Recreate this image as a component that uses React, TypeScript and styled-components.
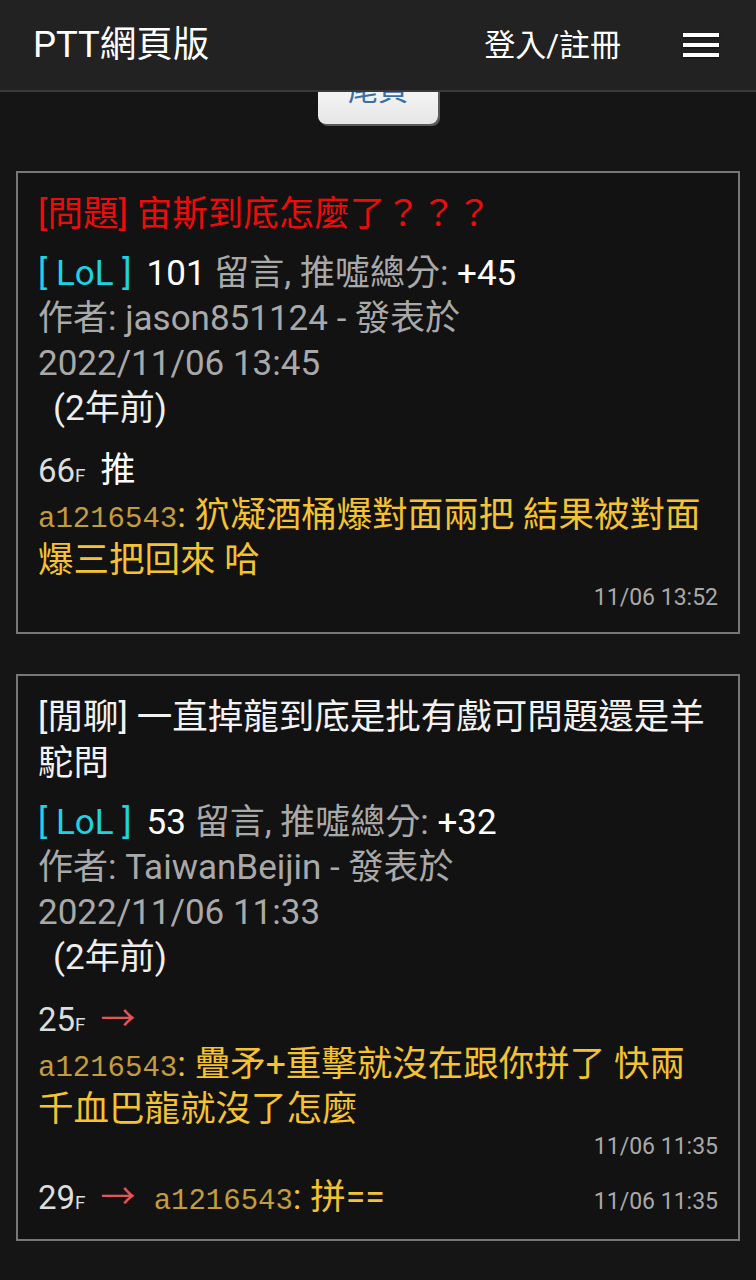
import React from 'react';
import styled, { createGlobalStyle } from 'styled-components';

const GlobalStyle = createGlobalStyle`
  html, body { margin: 0; padding: 0; background: #151515; }
  body {
    font-family: Roboto, "Noto Sans CJK TC", sans-serif;
    color: #eee;
  }
  * { box-sizing: border-box; }
`;

const Header = styled.header`
  position: fixed;
  top: 0;
  left: 0;
  right: 0;
  height: 92px;
  background: #222;
  border-bottom: 2px solid #3a3a3a;
  display: flex;
  align-items: center;
  padding: 0 37px 0 33px;
  z-index: 10;
`;

const Brand = styled.div`
  flex: 1;
  font-size: 36.5px;
  color: #fff;
  line-height: 1;
`;

const Login = styled.a`
  font-size: 31px;
  color: #fff;
  text-decoration: none;
  margin-right: 62px;
  line-height: 1;
`;

const Burger = styled.svg`
  display: block;
  width: 36px;
  height: 24px;
  filter: drop-shadow(0 1px 1px rgba(0, 0, 0, 0.6));
`;

const Main = styled.main`
  padding-top: 68px;
  padding-bottom: 40px;
`;

const PagerRow = styled.div`
  display: flex;
  justify-content: center;
  margin-bottom: 47px;
`;

const PagerButton = styled.button`
  width: 120px;
  height: 56px;
  border: none;
  border-radius: 0 0 8px 8px;
  background: linear-gradient(#ffffff, #e6e6e6);
  box-shadow: 2px 2px 0 #5a5a5a;
  color: #3b6ea6;
  font-family: Roboto, "Noto Sans CJK TC", sans-serif;
  font-size: 30px;
  line-height: 44px;
  padding: 0 0 12px;
  display: flex;
  justify-content: center;
`;

const Card = styled.article`
  margin: 0 16px 40px;
  border: 2px solid #777;
  background: #121212;
  padding: 18px 20px 19px;
`;

const Title = styled.div<{ $tone: string }>`
  font-size: 35.5px;
  line-height: 46px;
  color: ${(p) => p.$tone};
  margin-bottom: 14px;
`;

const MetaLine = styled.div<{ $indent?: boolean; $light?: boolean }>`
  font-size: 35px;
  line-height: 45px;
  color: ${(p) => (p.$light ? '#eee' : '#a9a9a9')};
  padding-left: ${(p) => (p.$indent ? '15px' : '0')};
  white-space: nowrap;
`;

const Board = styled.span`
  color: #1fd3e2;
  margin-right: 15px;
`;

const Strong = styled.span`
  color: #fff;
`;

const Pushes = styled.div`
  margin-top: 17px;
  display: flex;
  flex-direction: column;
  gap: 13px;
`;

const PushRow = styled.div`
  display: flex;
  flex-wrap: wrap;
  align-items: baseline;
  line-height: 45px;
`;

const Floor = styled.span`
  font-size: 33px;
  color: #ddd;
  margin-right: 15px;
`;

const FloorMark = styled.span`
  font-size: 19px;
  line-height: 1;
`;

const Tag = styled.span<{ $arrow?: boolean }>`
  font-size: 35px;
  color: ${(p) => (p.$arrow ? '#e0575a' : '#fff')};
  margin-right: 18px;
`;

const Body = styled.span`
  max-width: calc(100% - 10px);
  font-size: 35.5px;
  color: #f4c232;
`;

const User = styled.span`
  font-family: "Liberation Mono", monospace;
  font-size: 29px;
  line-height: 1;
  color: #c29c3e;
`;

const Time = styled.span`
  margin-left: auto;
  font-size: 23px;
  line-height: 30px;
  color: #a9a9a9;
`;

type Push = { floor: number; tag: 'push' | 'arrow'; user: string; text: string; time: string };

type Post = {
  title: string;
  tone: string;
  board: string;
  count: number;
  score: string;
  author: string;
  date: string;
  ago: string;
  pushes: Push[];
};

const posts: Post[] = [
  {
    title: '[問題] 宙斯到底怎麼了？？？',
    tone: '#ec0c0c',
    board: 'LoL',
    count: 101,
    score: '+45',
    author: 'jason851124',
    date: '2022/11/06 13:45',
    ago: '(2年前)',
    pushes: [
      { floor: 66, tag: 'push', user: 'a1216543', text: '狖凝酒桶爆對面兩把 結果被對面爆三把回來 哈', time: '11/06 13:52' },
    ],
  },
  {
    title: '[閒聊] 一直掉龍到底是批有戲可問題還是羊駝問',
    tone: '#f2f2f2',
    board: 'LoL',
    count: 53,
    score: '+32',
    author: 'TaiwanBeijin',
    date: '2022/11/06 11:33',
    ago: '(2年前)',
    pushes: [
      { floor: 25, tag: 'arrow', user: 'a1216543', text: '疊矛+重擊就沒在跟你拼了 快兩千血巴龍就沒了怎麼', time: '11/06 11:35' },
      { floor: 29, tag: 'arrow', user: 'a1216543', text: '拼==', time: '11/06 11:35' },
    ],
  },
];

export default function App() {
  return (
    <>
      <GlobalStyle />
      <Header>
        <Brand>PTT網頁版</Brand>
        <Login href="#">登入/註冊</Login>
        <Burger viewBox="0 0 36 24" aria-label="menu">
          <rect x="0" y="0" width="36" height="4" fill="#fff" />
          <rect x="0" y="10" width="36" height="4" fill="#fff" />
          <rect x="0" y="20" width="36" height="4" fill="#fff" />
        </Burger>
      </Header>
      <Main>
        <PagerRow>
          <PagerButton>尾頁</PagerButton>
        </PagerRow>
        {posts.map((post, i) => (
          <Card key={i}>
            <Title $tone={post.tone}>{post.title}</Title>
            <MetaLine>
              <Board>[ {post.board} ]</Board>
              <Strong>{post.count}</Strong> 留言, 推噓總分: <Strong>{post.score}</Strong>
            </MetaLine>
            <MetaLine>作者: {post.author} - 發表於</MetaLine>
            <MetaLine>{post.date}</MetaLine>
            <MetaLine $indent $light>{post.ago}</MetaLine>
            <Pushes>
              {post.pushes.map((p, j) => (
                <PushRow key={j}>
                  <Floor>
                    {p.floor}
                    <FloorMark>F</FloorMark>
                  </Floor>
                  <Tag $arrow={p.tag === 'arrow'}>{p.tag === 'arrow' ? '→' : '推'}</Tag>
                  <Body>
                    <User>{p.user}</User>: {p.text}
                  </Body>
                  <Time>{p.time}</Time>
                </PushRow>
              ))}
            </Pushes>
          </Card>
        ))}
      </Main>
    </>
  );
}
